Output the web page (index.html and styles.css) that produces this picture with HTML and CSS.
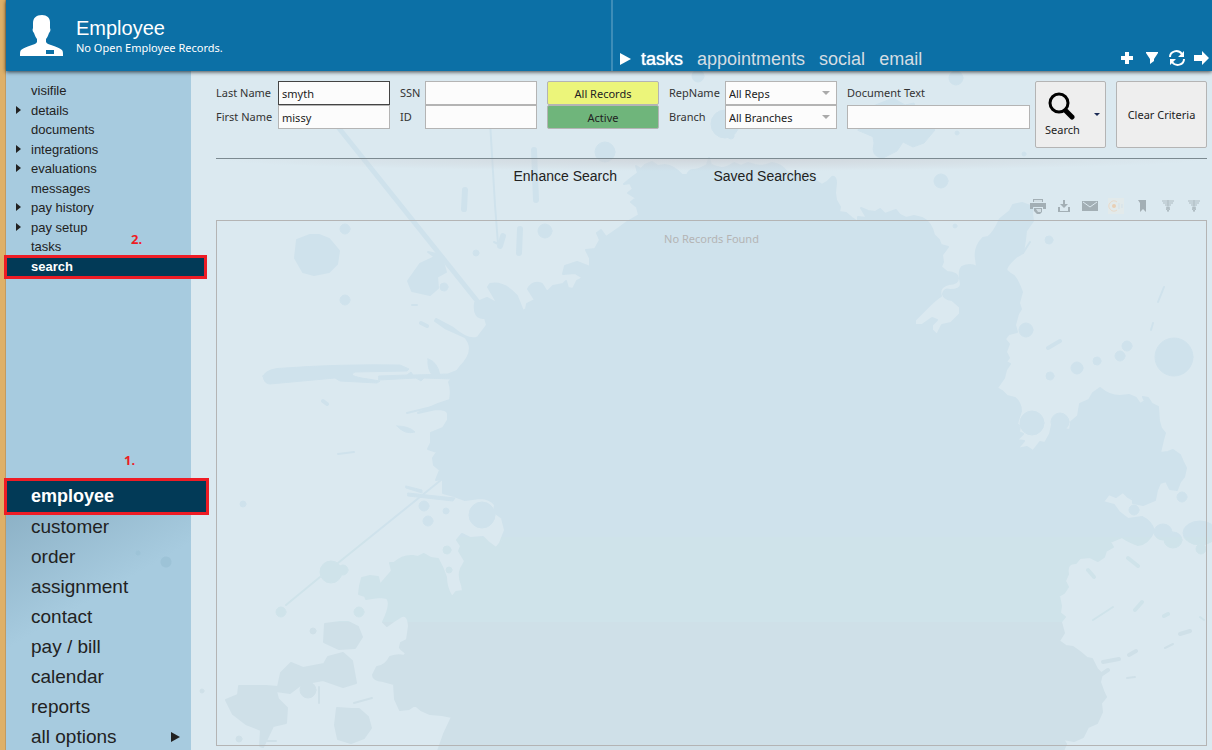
FILE: index.html
```html
<!DOCTYPE html>
<html lang="en">
<head>
    <meta charset="UTF-8">
    <meta name="viewport" content="width=device-width, initial-scale=1.0">
    <title>Employee Search</title>
    <link rel="stylesheet" href="styles.css">
</head>
<body>
    <header class="header">
        <div class="header-title">
            <svg class="avatar" width="44" height="42" viewBox="0 0 44 42">
                <path fill="#fff" d="M22 0c-6 0-9 3-9 8v5c-1 2 0 4 1 5 1 3 2 5 3 6v3c-1 2-3 2-5 3-5 2-9 3-11 5-1 1-1 3-1 6h43c0-3 0-5-1-6-2-2-6-3-11-5-2-1-4-1-5-3v-3c1-1 2-3 3-6 1-1 2-3 1-5V7c0-4-3-7-8-7z"/>
                <path fill="#0c70a6" d="M26 35h8v4h-8z"/>
            </svg>
            <div>
                <h1>Employee</h1>
                <p>No Open Employee Records.</p>
            </div>
        </div>
        <div class="header-bar">
            <nav class="tabs">
                <svg width="11" height="12" viewBox="0 0 11 12"><path fill="#fff" d="M0 0l11 6-11 6z"/></svg>
                <a href="#" class="active">tasks</a>
                <a href="#">appointments</a>
                <a href="#">social</a>
                <a href="#">email</a>
            </nav>
            <div class="header-actions">
                <button type="button" aria-label="Add"><svg width="16" height="16" viewBox="0 0 16 16"><path d="M6 2h4v4h4v4h-4v4H6v-4H2V6h4z"/></svg></button>
                <button type="button" aria-label="Filter"><svg width="16" height="16" viewBox="0 0 16 16"><path d="M2 2h12v1L10 9v2l-4 3V9L2 3z"/></svg></button>
                <button type="button" aria-label="Refresh"><svg width="16" height="16" viewBox="0 0 16 16"><path fill="none" stroke="#fff" stroke-width="2" d="M1 7c0-6 8-8 12-3M15 9c0 6-8 8-12 3"/><path d="M15 1v6H9zM1 15V9h6z"/></svg></button>
                <button type="button" aria-label="Next"><svg width="16" height="16" viewBox="0 0 16 16"><path d="M0 5h8V1l7 7-7 7v-4H0z"/></svg></button>
            </div>
        </div>
    </header>

    <div class="content">
        <aside class="sidebar">
            <nav>
                <ul class="sub-nav">
                    <li><a href="#">visifile</a></li>
                    <li class="has-children"><a href="#">details</a></li>
                    <li><a href="#">documents</a></li>
                    <li class="has-children"><a href="#">integrations</a></li>
                    <li class="has-children"><a href="#">evaluations</a></li>
                    <li><a href="#">messages</a></li>
                    <li class="has-children"><a href="#">pay history</a></li>
                    <li class="has-children"><a href="#">pay setup</a></li>
                    <li><a href="#">tasks</a></li>
                    <li class="current"><a href="#">search</a><span class="step">2.</span></li>
                </ul>
            </nav>
            <nav class="main-nav-wrap">
                <ul class="main-nav">
                    <li class="current"><a href="#">employee</a><span class="step">1.</span></li>
                    <li><a href="#">customer</a></li>
                    <li><a href="#">order</a></li>
                    <li><a href="#">assignment</a></li>
                    <li><a href="#">contact</a></li>
                    <li><a href="#">pay / bill</a></li>
                    <li><a href="#">calendar</a></li>
                    <li><a href="#">reports</a></li>
                    <li class="more"><a href="#">all options</a></li>
                </ul>
            </nav>
        </aside>

        <main class="main">
            <form class="criteria">
                <div class="fields names">
                    <label for="lastName">Last Name</label>
                    <input type="text" id="lastName" class="focused" value="smyth">
                    <label for="firstName">First Name</label>
                    <input type="text" id="firstName" value="missy">
                </div>
                <div class="fields ids">
                    <label for="ssn">SSN</label>
                    <input type="text" id="ssn">
                    <label for="empId">ID</label>
                    <input type="text" id="empId">
                </div>
                <div class="fields toggles">
                    <button type="button" class="toggle yellow">All Records</button>
                    <button type="button" class="toggle green">Active</button>
                </div>
                <div class="fields reps">
                    <label for="rep">RepName</label>
                    <span class="select"><select id="rep"><option>All Reps</option></select></span>
                    <label for="branch">Branch</label>
                    <span class="select"><select id="branch"><option>All Branches</option></select></span>
                </div>
                <div class="fields document">
                    <label for="docText">Document Text</label>
                    <input type="text" id="docText">
                </div>
                <div class="actions">
                    <button type="button" class="action search">
                        <span class="search-label">
                            <svg width="28" height="28" viewBox="0 0 28 28"><circle cx="11" cy="11" r="9" fill="none" stroke="#000" stroke-width="3"/><path d="M18 19l6 6" stroke="#000" stroke-width="5" stroke-linecap="round"/></svg>
                            Search
                        </span>
                        <span class="caret"></span>
                    </button>
                    <button type="button" class="action clear">Clear Criteria</button>
                </div>
            </form>

            <div class="search-links">
                <a href="#">Enhance Search</a>
                <a href="#">Saved Searches</a>
            </div>

            <div class="toolbar">
                <button type="button" aria-label="Print"><svg width="16" height="16" viewBox="0 0 16 16"><path d="M3 1h10v3H3zM0 5h16v6h-3V9H3v2H0zM4 10h8v4l-2 2H7l-3-3z" fill="#a3afb5"/><path d="M4 2h8v2H4zM6 11h5v3H8z" fill="#d2dee4"/></svg></button>
                <button type="button" aria-label="Download"><svg width="14" height="14" viewBox="0 0 14 14"><path d="M6 1h2v4h3L7 9 3 5h3zM1 8h2v4h8V8h2v5H1z" fill="#a3afb5"/></svg></button>
                <button type="button" aria-label="Email"><svg width="16" height="12" viewBox="0 0 16 12"><path d="M0 1h16v10H0z" fill="#a3afb5"/><path d="M1 2l7 5 7-5" fill="none" stroke="#dbe9f0" stroke-width="1"/></svg></button>
                <button type="button" aria-label="Record"><svg width="16" height="16" viewBox="0 0 16 16"><path d="M0 0h16v16H0z" fill="#e2eaeb"/><path d="M9 4a5 5 0 1 0 0 8" fill="none" stroke="#e8d9c9" stroke-width="1"/><circle cx="6" cy="8" r="2" fill="#e8cfb5"/><path d="M11 5v6M14 6v4" stroke="#d3e1e9"/></svg></button>
                <button type="button" aria-label="Bookmark"><svg width="8" height="12" viewBox="0 0 8 12"><path d="M0 0h8v12L5 9l-3 3V3z" fill="#a3afb5"/></svg></button>
                <button type="button" aria-label="Medical"><svg width="14" height="14" viewBox="0 0 14 14"><path d="M1 2h12M2 4h10M4 6h6M7 1v12M5 8l4 2-3 2M9 8l-4 2 3 2" fill="none" stroke="#aebbc1"/></svg></button>
                <button type="button" aria-label="Benefits"><svg width="14" height="14" viewBox="0 0 14 14"><path d="M1 2h12M2 4h10M4 6h6M7 1v12M5 8l4 2-3 2M9 8l-4 2 3 2" fill="none" stroke="#aebbc1"/></svg></button>
            </div>

            <section class="results">No Records Found</section>
        </main>
    </div>

    <!-- paint splatter behind the content -->
    <svg class="splatter" viewBox="0 0 1212 750" preserveAspectRatio="xMinYMin slice" aria-hidden="true">
        <defs>
            <linearGradient id="paint" gradientUnits="userSpaceOnUse" x1="0" y1="0" x2="0" y2="750">
                <stop offset="0.716" stop-color="#cfe2ec"/>
                <stop offset="0.716" stop-color="#cfe3ea"/>
                <stop offset="0.829" stop-color="#cfe3ea"/>
                <stop offset="0.829" stop-color="#cfe0e8"/>
            </linearGradient>
        </defs>
        <g fill="url(#paint)" stroke="url(#paint)" stroke-linejoin="round" stroke-linecap="round">
            <path stroke-width="2" d="M639 215L637 207 631 202 636 198 628 193 633 189 630 183 624 184 630 179 638 173 636 166 641 169 645 165 652 162 658 166 665 165Q674 166 682 175L687 175Q689 170 693 170 698 170 707 165L709 158 711 165 717 167Q724 170 734 163L741 166 748 163 755 165Q764 167 772 163 781 164 787 172L798 176 804 172 810 172 815 180 822 185Q828 182 832 177 836 176 836 183L835 193 836 200 840 207 839 212 846 213 852 218 858 222 858 217 867 218 861 208 868 211 875 212 880 209 885 214 896 210 900 215 906 218 914 216 922 218Q931 222 934 235L939 240 941 245 948 247 942 255 943 262 941 267 947 272Q958 273 958 278 958 284 949 284 938 287 941 296 Q937 298 930 305L915 320 915 325 922 325 932 318 937 320 932 325 932 330 937 335 942 325 951 323 960 314 960 307 952 300 Q944 299 943 294 944 288 950 290 961 290 961 284 958 271 962 267 970 263 977 267L976 259Q974 247 983 238L988 237Q994 233 1000 219L1010 211 1013 205 1022 203 1033 207 1032 213 1033 221 1026 231 1025 240 1023 253 1016 257Q1004 268 1007 271 1011 275 1014 276 1018 281 1022 292L1019 303 1021 309 1018 314 1015 325 1017 332 1009 334 1005 339 1009 344 1006 352 1009 358 1006 362 1010 364 1006 370 1004 378 997 388 1002 391 1007 396 1015 398Q1021 403 1021 411L1017 424 1020 426 1019 432 1023 434 1017 440 1024 441 1017 449 1027 447 1033 451 1040 442 1045 443 1050 434 1052 425 1063 429 1070 430 1071 422 1078 416 1080 404 1089 400 1093 393 1100 388Q1109 396 1120 396L1129 395 1136 398 1140 404 1145 401 1143 397 1148 398 1152 404 1158 407 1159 421 1161 428 1165 433 1163 440 1160 453 1168 452 1173 450 1180 455 1183 462 1186 468 1184 477 1180 482 1177 490 1170 489 1166 481 1160 483 1157 490 1155 500 1143 505 1133 503 1133 500 1128 497 1123 492 1116 497 1109 494 1103 502 1114 505 1119 512 1128 519 1142 517Q1152 522 1154 531 1148 544 1138 545 1127 541 1122 537L1117 539 1110 542 1113 547 1106 551 1104 557 1098 561 1090 557 1080 558 1076 563Q1066 563 1068 574L1065 581 1068 587 1064 593 1059 596 1061 606 1060 613 1065 617 1061 622 1064 633 1059 641 1066 646 1073 647 1080 652 1087 658 1092 659 1097 669 1102 674 1100 682 1104 693 1106 697 1101 703 1102 712 1097 723 1088 727 1083 737 1074 741 1063 739 1066 744 1063 751H438L444 734 452 717 442 715 430 714 421 710 415 705 409 709 400 710 395 699 394 684 383 681Q373 680 373 675L377 667Q386 666 390 657 398 654 404 656L406 653Q399 648 400 647L401 643 407 640 409 626Q408 614 402 616L394 621 387 626 383 622Q392 604 387 598L380 597 372 598 366 599 365 596 359 594 360 586 362 578 370 576 378 577 380 585L386 578 392 571 390 563 394 563Q403 555 413 556L418 557 424 554 431 558 438 559 443 569 446 577Q446 588 452 597L456 592 463 591 462 585Q457 573 463 565L465 561 459 551 461 546 457 540 462 534 470 538 483 537 488 542 496 548 500 543 505 530 502 518 494 512 495 505Q490 498 480 498L465 500 454 496 443 493 443 479 436 480 440 470 434 465 433 458 437 452 428 449 431 443 431 433 443 428 448 420 448 414Q448 409 436 409L418 413 438 404 450 400Q452 390 449 382L460 367Q477 350 465 337L445 328 435 321 436 319 453 328Q470 342 478 337L487 325 485 318Q473 319 475 303L487 298 498 304 488 287 490 284Q504 281 517 296L523 311 526 309 527 304 535 300 528 289Q533 280 542 284L547 292 553 286 563 284 566 281 568 288 573 289 577 281 583 278 575 273 563 274 565 266 577 262 590 267 590 258 586 250 595 249 600 240 597 233 601 230 606 237 619 228 627 222z"/>
            <path d="M858 130L863 119 868 108 893 98 905 105 914 103 918 115 935 130 924 143 913 147 903 142 897 151 883 158Q870 157 874 143L873 137z"/>
            <!-- streaks -->
            <path fill="none" stroke-width="5" d="M338 127L478 302"/>
            <path fill="none" stroke-width="2" d="M441 480L338 563M320 577L286 605M488 88L495 205 498 244 494 242M407 413l33-8M338 454l16-2"/>
            <path stroke-width="1" d="M263 376Q267 368 285 368 340 364 400 365L409 369 407 371 355 372Q346 376 368 379L380 381 377 383 340 381 335 378 270 384Q264 384 263 376zM379 376l28-1 4-3 2 3 35-1 10-4-6 9-28-1-3 3-5-3-37 2zM428 359q9 2 12 16h-8q-5-7-4-16zM397 426q12 0 18 6-10 3-18-6zM408 493l47 5-2 3-45-5zM406 486l16 4v3l-16-5z"/>
            <path fill="none" stroke-width="6" d="M534 150l2 50M520 229l-1 24M465 190l-1 19M503 236l-3 10"/>
            <!-- drops -->
            <path stroke-width="2" d="M297 240l13-5 9 0 10 4 10 12-2 13-8 8-15 3-11-3-8-14z"/>
            <path stroke-width="2" d="M420 264l15-7-7-5 13 3 5 17-9 5 1 11-8 7-18-4-4-10z"/>
            <path stroke-width="2" d="M325 624l15-2 8 0 10 5 4 10-7 11-16 1-15-7zM226 700l12-5 1-9 27 0 12 1 3-14 10-10 12 5 21-4 4-7 15-4 9 8 4 22-13 4-20-7-21 4-12 9-14-2 2 8 9 9-1 15-13 3-10 21-3-1 1-16-15-6-13-10z"/>
            <path stroke-width="2" d="M337 708l15 1 7 0 9 8 3 11-7 10-13 5-13-4-3-14z"/>
            <circle cx="1174" cy="357" r="19"/><circle cx="1032" cy="423" r="12"/><circle cx="1060" cy="422" r="9"/>
            <circle cx="482" cy="515" r="13"/><circle cx="331" cy="572" r="11"/><circle cx="343" cy="570" r="5"/>
            <circle cx="308" cy="690" r="8"/><circle cx="281" cy="612" r="5"/><circle cx="359" cy="612" r="5"/>
            <circle cx="345" cy="229" r="5"/><circle cx="345" cy="300" r="5"/><circle cx="444" cy="287" r="4"/>
            <circle cx="545" cy="231" r="7"/><circle cx="476" cy="253" r="3"/><circle cx="605" cy="152" r="10"/>
            <circle cx="941" cy="181" r="7"/><circle cx="725" cy="124" r="14"/><circle cx="731" cy="136" r="3"/>
            <circle cx="698" cy="76" r="6"/><circle cx="956" cy="78" r="7"/><circle cx="957" cy="133" r="2"/><circle cx="1024" cy="154" r="2"/>
            <circle cx="1026" cy="330" r="7"/><circle cx="1077" cy="368" r="6"/><circle cx="1050" cy="376" r="4"/>
            <circle cx="1097" cy="361" r="4"/><circle cx="1120" cy="356" r="5"/><circle cx="1127" cy="346" r="5"/>
            <circle cx="1049" cy="240" r="4"/><circle cx="955" cy="226" r="2"/><circle cx="1182" cy="497" r="5"/><circle cx="1134" cy="510" r="5"/>
            <circle cx="424" cy="506" r="5"/><circle cx="428" cy="521" r="5"/><circle cx="446" cy="511" r="3"/><circle cx="447" cy="550" r="4"/><circle cx="449" cy="570" r="3"/>
            <circle cx="243" cy="504" r="3"/><circle cx="202" cy="691" r="2"/><circle cx="313" cy="631" r="3"/><circle cx="239" cy="739" r="3"/>
            <ellipse cx="1163" cy="532" rx="9" ry="8"/><ellipse cx="1173" cy="540" rx="9" ry="8"/><ellipse cx="1200" cy="533" rx="17" ry="12"/><circle cx="1201" cy="549" r="5"/>
            <path fill="none" stroke-width="4" d="M1048 348l12-7M1128 558l10 8M1135 610l7-8M1103 662l16-3M1129 655l7-4M1180 634l10-3M323 401l4 3M421 323l6 3M1164 616l4-2M1088 570l6 7M1102 674l6-4"/>
            <path fill="none" stroke-width="2" d="M1158 302l6-15M1093 620l20-13M1023 253l7-11M1151 330l2-7M1127 678l8-1M319 687v16M354 703l18-5M267 741h9M412 305h5M1200 617l4 3M1165 648l8-4"/>
        </g>
    </svg>
</body>
</html>
```
FILE: styles.css
```css
* {
    box-sizing: border-box;
}

body {
    margin: 0;
    min-height: 100vh;
    display: flex;
    flex-direction: column;
    position: relative;
    overflow: hidden;
    padding-left: 6px;
    background: linear-gradient(to right, #deb068 5px, #c39a60 5px, #c39a60 6px, #dbe9f0 6px);
    color: #333;
    font-family: "Noto Sans", "Open Sans", sans-serif;
    font-size: 11px;
}

a {
    color: inherit;
    text-decoration: none;
}

button,
input,
select {
    font: inherit;
    color: #222;
}

ul {
    list-style: none;
    margin: 0;
    padding: 0;
}

/* header */
.header {
    display: flex;
    height: 71px;
    background-color: #0c70a6;
    color: white;
    box-shadow: 0 1px 4px rgba(0, 0, 0, 0.7);
    z-index: 2;
}

.header-title {
    flex: 0 0 calc(50% + 2px);
    display: flex;
    gap: 12px;
    padding: 15px 0 0 14px;
}

.header-title h1 {
    margin: 0;
    font-family: "Liberation Sans", Arial, sans-serif;
    font-size: 20px;
    font-weight: normal;
    line-height: 26px;
}

.header-title p {
    margin: 0;
    line-height: 14px;
}

.header-bar {
    flex: 1;
    display: flex;
    justify-content: space-between;
    align-items: flex-end;
    padding: 0 2px 0 7px;
    border-left: 2px solid #3d8db8;
}

.tabs {
    display: flex;
    align-items: center;
    gap: 14px;
    font-family: "Liberation Sans", Arial, sans-serif;
    font-size: 18px;
    line-height: 24px;
    color: #d4dde3;
}

.tabs svg {
    margin-right: -4px;
}

.tabs .active {
    color: white;
    text-shadow: 0 0 1px white;
}

.header-actions {
    display: flex;
    gap: 9px;
    padding-bottom: 5px;
}

.header-actions button,
.toolbar button {
    display: flex;
    align-items: center;
    justify-content: center;
    width: 16px;
    height: 16px;
    padding: 0;
    border: none;
    background: none;
    fill: white;
}

/* sidebar */
.content {
    flex: 1;
    display: flex;
    z-index: 1;
}

.sidebar {
    width: 185px;
    display: flex;
    flex-direction: column;
    justify-content: space-between;
    padding-top: 10px;
    background-color: #a7cbdf;
    color: #222;
    font-family: "Liberation Sans", Arial, sans-serif;
}

.sub-nav {
    display: grid;
    grid-auto-rows: 1fr;
    height: 195px;
    font-size: 13px;
    line-height: 19px;
}

.sidebar li {
    position: relative;
}

.sidebar li a {
    display: block;
    padding-left: 25px;
}

.sub-nav .has-children::before {
    content: "";
    position: absolute;
    left: 10px;
    top: 5px;
    border: 4px solid transparent;
    border-left: 5px solid #222;
    border-right: none;
}

.sidebar .current a {
    margin: -2px -16px -3px -2px;
    padding-left: 24px;
    border: 3px solid #ee1c25;
    background-color: #023a57;
    color: white;
    font-weight: bold;
}

.sub-nav .current a {
    line-height: 18px;
}

.main-nav-wrap {
    background:
        radial-gradient(circle at 132px 73px, #9dc3d7 2px, transparent 3px),
        radial-gradient(circle at 160px 82px, #9dc3d7 5px, transparent 6px),
        linear-gradient(150deg, #86abc0, #a7cbdf 45%);
}

.main-nav {
    margin-bottom: -2px;
    font-size: 19px;
    line-height: 30px;
}

.main-nav .current a {
    margin-right: -18px;
    font-size: 18px;
    line-height: 31px;
}

.main-nav .more::after {
    content: "";
    position: absolute;
    right: 11px;
    top: 10px;
    border: 5px solid transparent;
    border-left: 9px solid #222;
    border-right: none;
}

.step {
    position: absolute;
    bottom: 100%;
    left: 118px;
    margin-bottom: 8px;
    color: #ee1c25;
    font-family: "Noto Sans", "Open Sans", sans-serif;
    font-size: 13px;
    font-weight: bold;
    line-height: 20px;
}

.sub-nav .step {
    left: 125px;
}

/* search form */
.main {
    flex: 1;
    display: flex;
    flex-direction: column;
    padding: 10px 5px 4px 25px;
}

.criteria {
    display: flex;
    gap: 10px;
    padding-bottom: 10px;
    border-bottom: 1px solid #7c8a91;
}

.fields {
    display: grid;
    grid-auto-rows: 24px;
    align-items: center;
    align-content: start;
}

.names {
    grid-template-columns: 62px 112px;
}

.ids {
    grid-template-columns: 25px 112px;
}

.toggles {
    grid-template-columns: 112px;
}

.reps {
    grid-template-columns: 56px 112px;
}

.document {
    flex: 1;
}

.fields label {
    padding-bottom: 1px;
}

.fields input,
.fields select {
    width: 100%;
    height: 24px;
    padding: 0 3px;
    border: 1px solid #b4b4b4;
    border-radius: 0;
    background-color: #fcfcfc;
    outline: none;
}

.fields .focused {
    border-color: #444;
}

.select {
    position: relative;
}

.select select {
    display: block;
    appearance: none;
}

.select::after {
    content: "";
    position: absolute;
    right: 7px;
    top: 10px;
    border: 4px solid transparent;
    border-top-color: #aaa;
    border-bottom: none;
}

.toggle {
    height: 24px;
    padding: 0;
    border: 1px solid #b4b4b4;
    border-radius: 2px;
}

.yellow {
    background-color: #ecf57a;
}

.green {
    background-color: #6fb57b;
}

.actions {
    display: flex;
    gap: 10px;
    margin-left: -5px;
}

.action {
    height: 67px;
    padding: 0;
    border: 1px solid #b4b4b4;
    border-radius: 2px;
    background-color: #eee;
}

.search {
    display: flex;
    align-items: center;
    justify-content: space-between;
    width: 71px;
    padding: 0 5px 0 9px;
}

.search-label {
    display: flex;
    flex-direction: column;
    align-items: center;
    gap: 2px;
}

.caret {
    border: 3px solid transparent;
    border-top-color: #1b2a55;
    border-bottom: none;
}

.clear {
    width: 91px;
}

.search-links {
    display: grid;
    grid-template-columns: 200px 200px;
    justify-content: center;
    padding: 7px 0 0 4px;
    background: radial-gradient(ellipse 50% 12px at 50% 0, rgba(200, 200, 205, 0.6), transparent);
    color: #222;
    font-family: "Liberation Sans", Arial, sans-serif;
    font-size: 14px;
    line-height: 20px;
}

.toolbar {
    display: flex;
    justify-content: flex-end;
    gap: 10px;
    padding: 12px 5px 6px 0;
}

.results {
    flex: 1;
    padding-top: 10px;
    border: 1px solid #b4b4b4;
    color: #b4b4b4;
    text-align: center;
    line-height: 16px;
}

.splatter {
    position: absolute;
    top: 0;
    left: 0;
    width: 100%;
    height: 100%;
}
```
